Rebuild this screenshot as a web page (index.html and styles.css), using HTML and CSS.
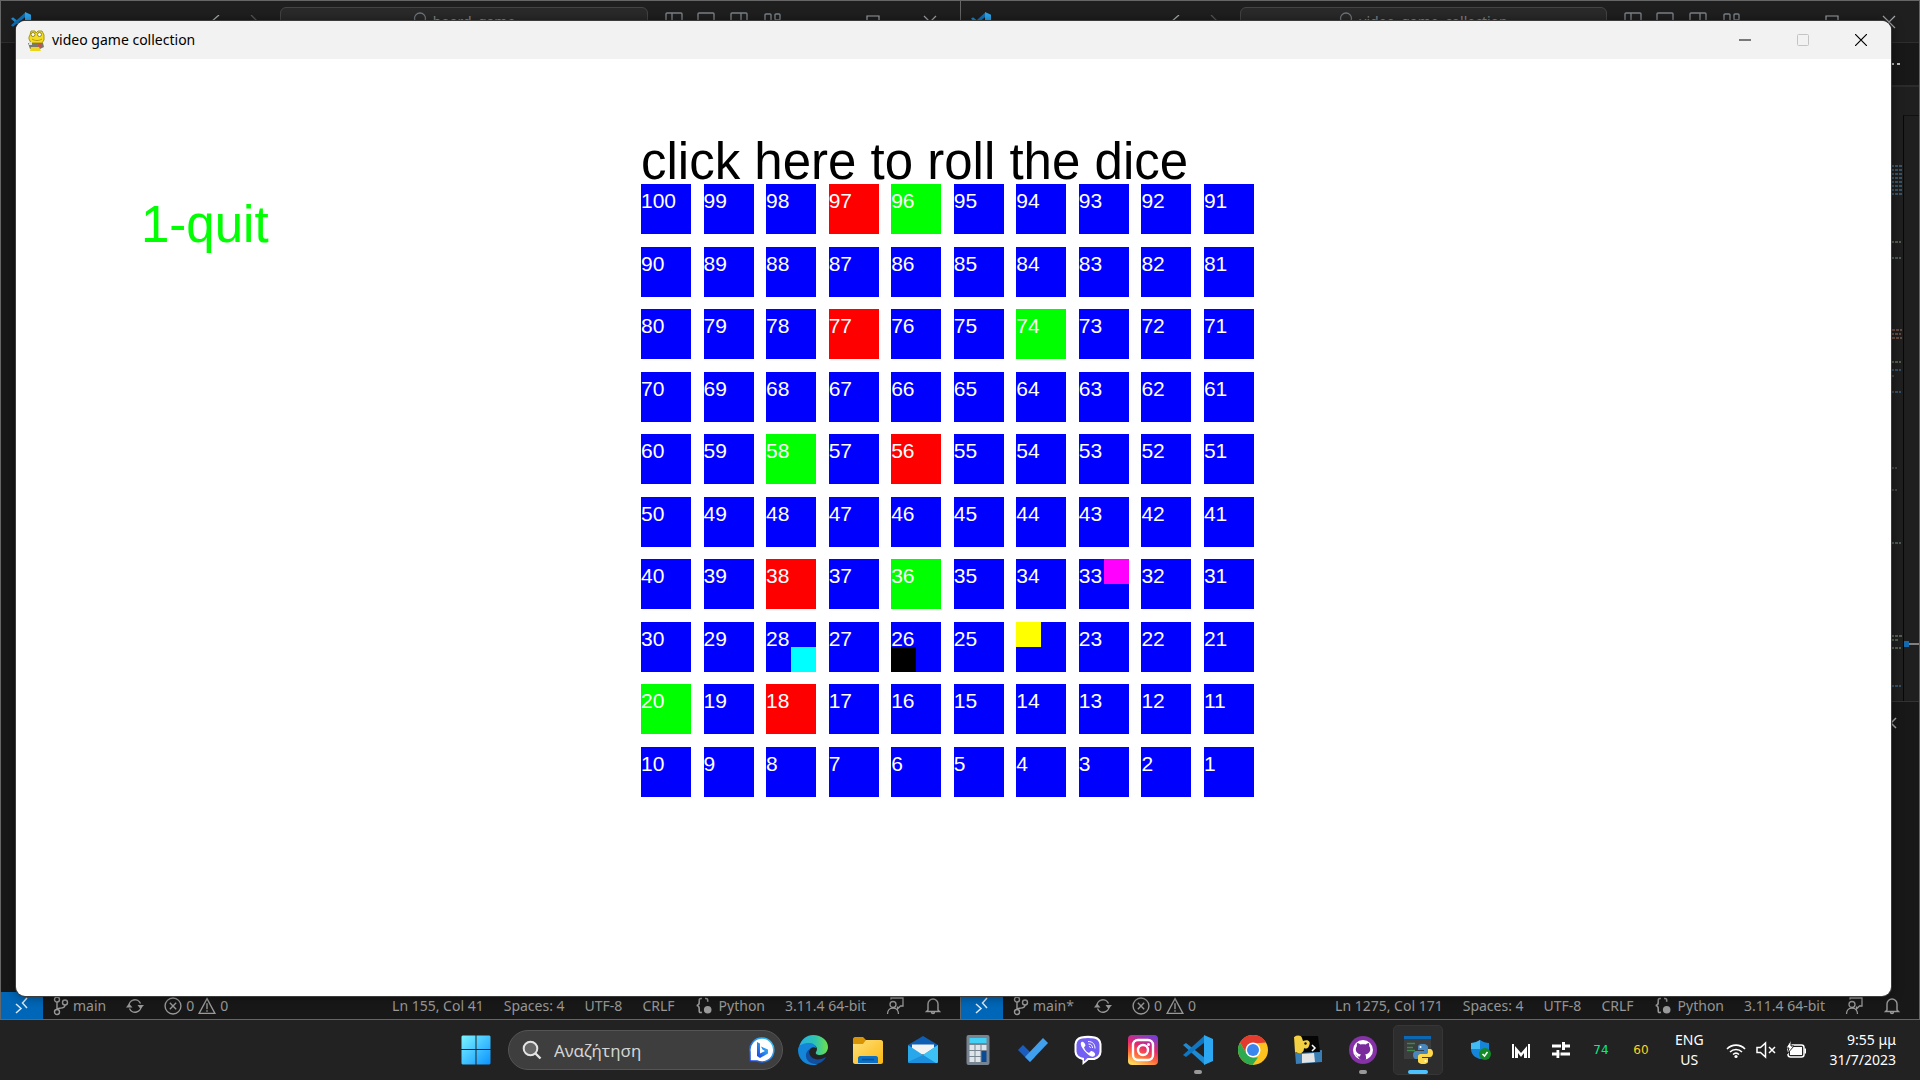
FILE: index.html
```html
<!DOCTYPE html>
<html lang="el">
<head>
<meta charset="utf-8">
<title>video game collection</title>
<link rel="stylesheet" href="styles.css">
</head>
<body>
<svg class="defs" aria-hidden="true">
  <defs>
    <linearGradient id="g-win" x1="0" y1="0" x2="1" y2="1"><stop offset="0" stop-color="#7cf5ff"/><stop offset="1" stop-color="#0a93ff"/></linearGradient>
    <linearGradient id="g-edge" x1="0" y1="0" x2="1" y2="0"><stop offset="0" stop-color="#27b1e8"/><stop offset=".55" stop-color="#2fc3b0"/><stop offset="1" stop-color="#6fe04a"/></linearGradient>
    <linearGradient id="g-folder" x1="0" y1="0" x2="1" y2="1"><stop offset="0" stop-color="#ffe07a"/><stop offset="1" stop-color="#fbb80f"/></linearGradient>
    <linearGradient id="g-insta" x1=".3" y1="1" x2=".7" y2="0"><stop offset="0" stop-color="#ffd65c"/><stop offset=".3" stop-color="#fd6a3a"/><stop offset=".6" stop-color="#e3286f"/><stop offset="1" stop-color="#7a3fd0"/></linearGradient>
    <linearGradient id="g-bing" x1="0" y1="1" x2="1" y2="0"><stop offset="0" stop-color="#1b3fe0"/><stop offset="1" stop-color="#35d0f5"/></linearGradient>
    <symbol id="i-code" viewBox="0 0 30 30"><path d="m0 10 3-2L22 23v6h-1L0 10Z" fill="#1f8ad2"/><path d="m0 20 3 2L22 7V1h-1L0 20Z" fill="#0f76bf"/><path d="m21 0 9 4v22l-9 4Z" fill="#2ca8f2"/></symbol>
    <symbol id="i-remote" viewBox="0 0 14 18"><path d="m1 7 5 4.500L1 16M12 1 7.500 6l4.500 5" fill="none" stroke="#dfe9f2" stroke-width="1.500"/></symbol>
    <symbol id="i-branch" viewBox="0 0 16 20"><g fill="none" stroke="#999" stroke-width="1.400"><circle cx="4" cy="3.500" r="2.500"/><circle cx="4" cy="16" r="2.500"/><circle cx="12" cy="6.500" r="2.500"/><path d="M4 6v7.500M12 9c0 3-3 3-5 3.200-2 .2-3 .8-3 1.500"/></g></symbol>
    <symbol id="i-sync" viewBox="0 0 18 18"><path d="M3 9.500A6 6 0 0 1 14.500 6.500M15 8.500A6 6 0 0 1 3.500 11.500" fill="none" stroke="#999" stroke-width="1.400"/><path d="m0 10.500 3-4 3.500 4ZM18 8l-3.500 4L11.500 8Z" fill="#999"/></symbol>
    <symbol id="i-err" viewBox="0 0 17 17"><g fill="none" stroke="#999" stroke-width="1.300"><circle cx="8.500" cy="8.500" r="7.500"/><path d="m5.500 5.500 6 6m0-6-6 6"/></g></symbol>
    <symbol id="i-warn" viewBox="0 0 17 17"><g fill="none" stroke="#999" stroke-width="1.300"><path d="M8.500 1.500 16 15.500H1ZM8.500 6v5.500m0 1v1.500"/></g></symbol>
    <symbol id="i-brace" viewBox="0 0 16 17"><path d="M6 1.500C3 1 3.500 3 3.500 5S3 8 1 8c2 0 2.500 1 2.500 3.500S3 15 6 14.500M9 1.500c3-.5 2.500 1.500 2.500 3" fill="none" stroke="#999" stroke-width="1.500"/><circle cx="11.500" cy="12" r="3.600" fill="#999"/></symbol>
    <symbol id="i-feed" viewBox="0 0 18 18"><g fill="none" stroke="#999" stroke-width="1.300"><path d="M5 2.500V1h12v8h-2.500L11.500 12V9.500"/><circle cx="7" cy="7.500" r="3"/><path d="M1.500 17c0-8 11-8 11 0"/></g></symbol>
    <symbol id="i-bell" viewBox="0 0 16 18"><path d="M3 13V7a5 5 0 0 1 10 0v6l1.500 1.500h-13ZM6.500 15a1.500 1.500 0 0 0 3 0" fill="none" stroke="#999" stroke-width="1.400"/></symbol>
    <symbol id="i-layouts" viewBox="0 0 116 18"><g fill="none" stroke="#7d848a" stroke-width="1.400"><rect x="1" y="1" width="16" height="16" rx="1"/><path d="M7 1v16"/><rect x="33" y="1" width="16" height="16" rx="1"/><path d="M33 12h16"/><rect x="66" y="1" width="16" height="16" rx="1"/><path d="M76 1v16"/><rect x="100" y="2" width="6" height="15" rx="1"/><rect x="110" y="2" width="5" height="6" rx="1"/></g></symbol>
    <symbol id="i-controls" viewBox="0 0 116 14"><path d="M1 7h13M45 1h12v12H45ZM102 1l12 12m0-12-12 12" fill="none" stroke="#a4a8ac" stroke-width="1.200"/></symbol>
    <symbol id="i-arrows" viewBox="0 0 56 14"><path d="M12 0 4 7l8 7" fill="none" stroke="#a9adb1" stroke-width="1.300"/><path d="m44 0 7 7-7 7" fill="none" stroke="#55585b" stroke-width="1.300"/></symbol>
    <symbol id="i-lens" viewBox="0 0 14 18"><path d="M7 1a5.500 5.500 0 1 1 0 11A5.500 5.500 0 1 1 7 1M4 12l-3 5" fill="none" stroke="#71787e" stroke-width="1.300"/></symbol>
    <symbol id="i-py" viewBox="0 0 20 20"><path d="M10 0C5 0 5 2 5 3v3h6v1H3C1 7 0 9 0 11s1 4 3 4h2v-3c0-1 1-2 2-2h6c1 0 2-1 2-2V3c0-1-1-3-5-3Z" fill="#4787bd"/><path d="M10 20c5 0 5-2 5-3v-3H9v-1h8c2 0 3-2 3-4s-1-4-3-4h-2v3c0 1-1 2-2 2H7c-1 0-2 1-2 2v5c0 1 1 3 5 3Z" fill="#ffd94d"/><circle cx="7.500" cy="3" r="1" fill="#fff"/><circle cx="12.500" cy="17" r="1" fill="#fff"/></symbol>
  </defs>
</svg>

<div class="desktop">
  <section class="editor">
    <header class="editor-title">
      <svg class="editor-logo"><use href="#i-code"/></svg>
      <svg class="arrows"><use href="#i-arrows"/></svg>
      <button class="palette" type="button"><svg class="lens"><use href="#i-lens"/></svg>board_game</button>
      <svg class="layouts"><use href="#i-layouts"/></svg>
      <svg class="controls"><use href="#i-controls"/></svg>
    </header>
    <div class="editor-body"><i class="active-mark"></i></div>
    <footer class="status">
      <button class="remote" type="button" aria-label="Remote"><svg><use href="#i-remote"/></svg></button>
      <span class="item"><svg class="branch"><use href="#i-branch"/></svg>main</span>
      <span class="item"><svg><use href="#i-sync"/></svg></span>
      <span class="item"><svg><use href="#i-err"/></svg>0 <svg><use href="#i-warn"/></svg>0</span>
      <span class="item push">Ln 155, Col 41</span>
      <span class="item">Spaces: 4</span>
      <span class="item">UTF-8</span>
      <span class="item">CRLF</span>
      <span class="item lang"><svg><use href="#i-brace"/></svg>Python</span>
      <span class="item">3.11.4 64-bit</span>
      <span class="item"><svg><use href="#i-feed"/></svg></span>
      <span class="item"><svg><use href="#i-bell"/></svg></span>
    </footer>
  </section>
  <section class="editor">
    <header class="editor-title">
      <svg class="editor-logo"><use href="#i-code"/></svg>
      <svg class="arrows"><use href="#i-arrows"/></svg>
      <button class="palette" type="button"><svg class="lens"><use href="#i-lens"/></svg>video_game_collection</button>
      <svg class="layouts"><use href="#i-layouts"/></svg>
      <svg class="controls"><use href="#i-controls"/></svg>
    </header>
    <div class="tabs"><svg class="dots" viewBox="0 0 16 4"><path d="M0 1h3v2H0ZM6 1h3v2H6ZM12 1h3v2h-3Z" fill="#bbb"/></svg></div>
    <div class="code">
      <svg class="minimap" viewBox="0 0 12 614">
        <g stroke-dasharray="3 1" stroke-width="2" fill="none">
          <path d="M0 79h11M0 83h11M0 87h11M0 91h11M0 95h11M0 99h11M0 103h11M0 107h11" stroke="#36566c"/>
          <path d="M0 155h10M0 275h10M0 549h11M0 553h8M0 561h10" stroke="#52604b"/>
          <path d="M0 171h10M0 456h10" stroke="#4a5a56"/>
          <path d="M1 243h10M0 247h10M1 251h10" stroke="#654b42"/>
          <path d="M0 283h10M4 305h6M0 599h10" stroke="#34506a"/>
          <path d="M0 289h3M0 305h3M0 381h6M0 403h6" stroke="#444"/>
        </g>
      </svg>
      <div class="ruler"><i class="ruler-mark"></i></div>
    </div>
    <div class="panel"><svg class="panel-close" viewBox="0 0 12 12"><path d="m1 1 10 10M11 1 1 11" stroke="#aaa" stroke-width="1.500"/></svg></div>
    <footer class="status">
      <button class="remote" type="button" aria-label="Remote"><svg><use href="#i-remote"/></svg></button>
      <span class="item"><svg class="branch"><use href="#i-branch"/></svg>main*</span>
      <span class="item"><svg><use href="#i-sync"/></svg></span>
      <span class="item"><svg><use href="#i-err"/></svg>0 <svg><use href="#i-warn"/></svg>0</span>
      <span class="item push">Ln 1275, Col 171</span>
      <span class="item">Spaces: 4</span>
      <span class="item">UTF-8</span>
      <span class="item">CRLF</span>
      <span class="item lang"><svg><use href="#i-brace"/></svg>Python</span>
      <span class="item">3.11.4 64-bit</span>
      <span class="item"><svg><use href="#i-feed"/></svg></span>
      <span class="item"><svg><use href="#i-bell"/></svg></span>
    </footer>
  </section>

  <main class="window">
    <header class="window-title">
      <svg class="window-icon" viewBox="0 0 18 21"><path d="M4 1h4l1 2 2-2h4l2 4v5l-2 3H4L2 9V7l1-2Z" fill="#f6dc1e" stroke="#a3941c"/><circle cx="6" cy="4.500" r="2" fill="#fff" stroke="#776d20" stroke-width=".8"/><circle cx="12.500" cy="4.500" r="2" fill="#fff" stroke="#776d20" stroke-width=".8"/><path d="M5 9c3 2 7 2 10 0" stroke="#b29a13" fill="none"/><path d="M1 13h15l1 4-4 2H3Z" fill="#77796c"/><path d="M11 13h3v4h-3Z" fill="#b9584b"/><path d="M4 17h8l2 4H3Z" fill="#eed51d"/><path d="M2 12h3v3H2Z" fill="#ddd"/></svg>
      <span class="window-name">video game collection</span>
      <button class="ctl" type="button" aria-label="Minimize"><svg viewBox="0 0 12 12"><path d="M0 6h12" stroke="#000" stroke-width="1.200"/></svg></button>
      <button class="ctl" type="button" aria-label="Maximize" disabled><svg viewBox="0 0 12 12"><rect x=".5" y=".5" width="11" height="11" rx="1" fill="none" stroke="#c4c4c4"/></svg></button>
      <button class="ctl" type="button" aria-label="Close"><svg viewBox="0 0 12 12"><path d="m0 0 12 12M12 0 0 12" stroke="#000" stroke-width="1.200"/></svg></button>
    </header>
    <div class="game">
      <div class="menu"><button class="quit" type="button">1-quit</button></div>
      <div class="play">
        <button class="roll" type="button">click here to roll the dice</button>
        <div class="board">
          <div class="tile">100</div><div class="tile">99</div><div class="tile">98</div><div class="tile snake">97</div><div class="tile ladder">96</div><div class="tile">95</div><div class="tile">94</div><div class="tile">93</div><div class="tile">92</div><div class="tile">91</div>
          <div class="tile">90</div><div class="tile">89</div><div class="tile">88</div><div class="tile">87</div><div class="tile">86</div><div class="tile">85</div><div class="tile">84</div><div class="tile">83</div><div class="tile">82</div><div class="tile">81</div>
          <div class="tile">80</div><div class="tile">79</div><div class="tile">78</div><div class="tile snake">77</div><div class="tile">76</div><div class="tile">75</div><div class="tile ladder">74</div><div class="tile">73</div><div class="tile">72</div><div class="tile">71</div>
          <div class="tile">70</div><div class="tile">69</div><div class="tile">68</div><div class="tile">67</div><div class="tile">66</div><div class="tile">65</div><div class="tile">64</div><div class="tile">63</div><div class="tile">62</div><div class="tile">61</div>
          <div class="tile">60</div><div class="tile">59</div><div class="tile ladder">58</div><div class="tile">57</div><div class="tile snake">56</div><div class="tile">55</div><div class="tile">54</div><div class="tile">53</div><div class="tile">52</div><div class="tile">51</div>
          <div class="tile">50</div><div class="tile">49</div><div class="tile">48</div><div class="tile">47</div><div class="tile">46</div><div class="tile">45</div><div class="tile">44</div><div class="tile">43</div><div class="tile">42</div><div class="tile">41</div>
          <div class="tile">40</div><div class="tile">39</div><div class="tile snake">38</div><div class="tile">37</div><div class="tile ladder">36</div><div class="tile">35</div><div class="tile">34</div><div class="tile">33<i class="token magenta"></i></div><div class="tile">32</div><div class="tile">31</div>
          <div class="tile">30</div><div class="tile">29</div><div class="tile">28<i class="token cyan"></i></div><div class="tile">27</div><div class="tile">26<i class="token black"></i></div><div class="tile">25</div><div class="tile"><i class="token yellow"></i></div><div class="tile">23</div><div class="tile">22</div><div class="tile">21</div>
          <div class="tile ladder">20</div><div class="tile">19</div><div class="tile snake">18</div><div class="tile">17</div><div class="tile">16</div><div class="tile">15</div><div class="tile">14</div><div class="tile">13</div><div class="tile">12</div><div class="tile">11</div>
          <div class="tile">10</div><div class="tile">9</div><div class="tile">8</div><div class="tile">7</div><div class="tile">6</div><div class="tile">5</div><div class="tile">4</div><div class="tile">3</div><div class="tile">2</div><div class="tile">1</div>
        </div>
      </div>
    </div>
  </main>
</div>

<nav class="taskbar">
  <div class="apps">
    <button class="app" type="button" aria-label="Start"><svg viewBox="0 0 30 30"><path d="M1.500.5H14.500V14H.5V1.500ZM15.500.5H28.500L29.500 1.500V14h-14ZM.5 15h14v14.500H1.500l-1-1ZM15.500 15h14v13.500l-1 1h-13Z" fill="url(#g-win)"/></svg></button>
    <label class="search">
      <svg class="search-lens" viewBox="0 0 20 20"><circle cx="8.500" cy="8.500" r="6.800" fill="#666" stroke="#e4e4e4" stroke-width="2"/><path d="m13.500 13.500 5 5" stroke="#e4e4e4" stroke-width="2.400"/></svg>
      <input type="text" placeholder="Αναζήτηση" aria-label="Αναζήτηση">
      <svg class="bing" viewBox="0 0 26 26"><path d="M13 1a12 12 0 1 1-5 23H1v-9A12 12 0 0 1 13 1Z" fill="#fff" stroke="url(#g-bing)" stroke-width="1.500"/><path d="m8 5 3 1.500v10l5-2.500-2.500-1.500-1.500-3 7 3v4L11 21l-3-2Z" fill="url(#g-bing)"/></svg>
    </label>
    <button class="app" type="button" aria-label="Edge"><svg viewBox="0 0 30 30"><path d="M1 12C3 4 9 0 15 0c9 0 15 6 15 12 0 5-4 8-8 8-3 0-5-1-4-3 3-4-1-8-6-8-6 0-10 2-11 3Z" fill="url(#g-edge)"/><path d="M0 15C0 10 5 8 11 8c4 0 7 2 7 5-8-4-12 12 2 16-2 1-4 1-5 1C7 30 0 24 0 15Z" fill="#1386d9"/><path d="M11 16c0 8 9 11 17 6-4 8-13 9-18 4-4-5-2-11 4-13-2 1-3 2-3 3Z" fill="#134f9e"/></svg></button>
    <button class="app" type="button" aria-label="Explorer"><svg viewBox="0 0 30 30"><path d="M0 4c0-1 1-2 2-2h8l3 3v6H0Z" fill="#d99406"/><path d="M0 9h10l3-4h15c1 0 2 1 2 2v20c0 1-1 2-2 2H2c-1 0-2-1-2-2Z" fill="url(#g-folder)"/><path d="M5 28v-5c0-1 1-2 2-2h16c1 0 2 1 2 2v5Z" fill="#0c70c4"/><path d="M9 24.500h12" stroke="#074d91" stroke-width="1.500"/></svg></button>
    <button class="app" type="button" aria-label="Mail"><svg viewBox="0 0 30 30"><path d="M0 10 15 1l15 9-4 5H4Z" fill="#0e5fb4"/><path d="M4 9.500h22v10H4Z" fill="#f3f3f3"/><path d="M0 10l15 10L30 10v17l-1 1H1l-1-1Z" fill="#28a8ea"/><path d="M15 20 30 10v17l-1 1h-2Z" fill="#3dc2f6"/><path d="m0 27 15-7 13 8H1Z" fill="#1c8fdd"/></svg></button>
    <button class="app" type="button" aria-label="Calculator"><svg viewBox="0 0 30 30"><rect x="3.500" width="23" height="30" rx="2" fill="#788490"/><path d="M6.500 3h17v5h-17Z" fill="#43d0f5"/><path d="M6.500 10h5v5h-5ZM12.500 10h5v5h-5ZM18.500 10h5v5h-5ZM6.500 16h5v5h-5ZM12.500 16h5v5h-5ZM6.500 22h5v5h-5ZM12.500 22h5v5h-5Z" fill="#dde4ea"/><path d="M18.500 16h5v11h-5Z" fill="#0c4b94"/></svg></button>
    <button class="app" type="button" aria-label="To Do"><svg viewBox="0 0 30 30"><path d="m0 15 5-5 12 12-5 5Z" fill="#1a5dbe"/><path d="M7 22 25 3l5 5-18 19Z" fill="#41a0ee"/></svg></button>
    <button class="app" type="button" aria-label="Viber"><svg viewBox="0 0 30 30"><path d="M8 1.500Q15 0 22 1.500 28 3 28.500 9v8q-.5 6-7 8h-6l-6 5v-5Q2 23 1.500 17V9Q2 3 8 1.500Z" fill="#fff"/><path d="M9 3.500q6-1 12 0 5 1 5.500 6v7q-.5 5-6 6.500h-6l-3.500 3.500V23Q4 22 3.500 16.500v-7Q4 4.500 9 3.500Z" fill="#7360f2"/><path d="M8.500 7c2-1.500 4 2 4 3.500l-1.500 2c1 3 3 5 5 5.500l2-2c2 0 5 2.500 4 4-2 4-7 0-10-3.500S6.500 9 8.500 7Z" fill="#fff"/><path d="M15 6.500c5 0 7 3 7 7M15.500 9c3 0 4 2 4 4M16 11.500c1 0 1.500 1 1.500 1.500" fill="none" stroke="#fff"/></svg></button>
    <button class="app" type="button" aria-label="Instagram"><svg viewBox="0 0 30 30"><rect width="30" height="30" rx="4" fill="url(#g-insta)"/><g fill="none" stroke="#fff" stroke-width="2.400"><rect x="5" y="5" width="20" height="20" rx="5"/><circle cx="15" cy="15" r="5"/></g><circle cx="20.500" cy="9.500" r="1.500" fill="#fff"/></svg></button>
    <button class="app open" type="button" aria-label="Visual Studio Code"><svg><use href="#i-code"/></svg></button>
    <button class="app" type="button" aria-label="Chrome"><svg viewBox="0 0 30 30"><circle cx="15" cy="15" r="15" fill="#fcc31e"/><path d="M2 7.500A15 15 0 0 1 28 7.500L15 8.500 8.500 18.700Z" fill="#e33b2e"/><path d="M2 7.500 8.500 18.700 15 22.500h5L14.500 30A15 15 0 0 1 2 7.500Z" fill="#2da94f"/><circle cx="15" cy="15" r="7.500" fill="#fff"/><circle cx="15" cy="15" r="6" fill="#3a86ee"/></svg></button>
    <button class="app" type="button" aria-label="PyCom"><svg viewBox="0 0 30 30"><path d="m2 17 27-2v12L3 29Z" fill="#397eb5"/><path d="M1 1h24l2 16-24 1Z" fill="#050505"/><path d="M1 2c3-2 7-2 8 1l1 3c6-2 8 1 6 5-1 3-4 3-5 2 0 6-5 6-9 4Z" fill="#f4d142"/><path d="m19 10 3 3-3 3" fill="none" stroke="#fff" stroke-width="1.500"/><circle cx="12.500" cy="8.500" r="1.200" fill="#111"/><path d="m9 19 12-1 1 9-13 1Z" fill="#e4e4e4"/></svg></button>
    <button class="app open" type="button" aria-label="GitHub Desktop"><svg viewBox="0 0 30 30"><circle cx="15" cy="15" r="14" fill="#8432a6"/><circle cx="15" cy="15" r="10" fill="#fff"/><path d="M12 24.500v-3c-3 .5-4-1-4.500-2.500M12 21c.5-1 .5-1 1-1.500-6-1-6-6-4-8.500-.5-1 0-2.500.3-3 1 0 2.500 1 3 1.500 2-.5 3.500-.5 5.500 0 .5-.5 2-1.500 3-1.500.3.500.7 2 .3 3 2 2.500 2 7.500-4 8.500.8.800.9 1.500.9 3v2c-2 .7-4 .7-6 0Z" fill="#7a2a9d"/></svg></button>
    <button class="app current" type="button" aria-label="Python"><svg viewBox="0 0 30 30"><path d="M1 1h27v23H1Z" fill="#3b3d3f"/><path d="M1 1h27v3H1Z" fill="#0d68b4"/><path d="M4 8.500h8M4 12.500h6M4 15.500h8" stroke="#3f8848" stroke-width="1.500"/><use href="#i-py" x="10" y="9" width="20" height="20"/></svg></button>
  </div>
  <div class="tray">
    <div class="tray-set">
      <svg viewBox="0 0 20 20"><path d="M9 0c3 2 6 3 9 3v6c0 6-5 9-9 10C5 18 0 15 0 9V3c3 0 6-1 9-3Z" fill="#1585dc"/><path d="M9 0v9H0V3c3 0 6-1 9-3Z" fill="#42baf2"/><circle cx="14" cy="14" r="6" fill="#138a26"/><path d="m11.500 14 2 2 3-4" fill="none" stroke="#fff" stroke-width="1.500"/></svg>
      <svg viewBox="0 0 20 20"><path d="M2 4v14M18 4v14" stroke="#fff" stroke-width="2"/><path d="M4 18V6l6 7 6-7v12h-3v-5l-3 4-3-4v5Z" fill="#fff"/></svg>
      <svg viewBox="0 0 20 20"><path d="M1 6h18M1 14h18" stroke="#fff" stroke-width="3"/><path d="M12.500 2v8M7 10v8" stroke="#fff" stroke-width="3"/><path d="M10.500 2v8M9 10v8" stroke="#222"/></svg>
      <span class="temp green">74</span>
      <span class="temp gold">60</span>
    </div>
    <div class="locale">ENG<br>US</div>
    <div class="net">
      <svg viewBox="0 0 20 20"><g fill="none" stroke="#fff" stroke-width="1.600"><path d="M1 9a12.500 12.500 0 0 1 18 0M4 12a8.500 8.500 0 0 1 12 0M7 14.500a4.500 4.500 0 0 1 6 0"/></g><circle cx="10" cy="16.500" r="1.600" fill="#fff"/></svg>
      <svg viewBox="0 0 20 20"><path d="M1 7.500h3.500l5-4.500v14l-5-4.500H1Z" fill="none" stroke="#fff" stroke-width="1.500"/><path d="m13 7 6 6m0-6-6 6" stroke="#fff" stroke-width="1.500"/></svg>
      <svg viewBox="0 0 20 20"><rect x="2" y="5" width="16" height="12" rx="2.500" fill="none" stroke="#fff" stroke-width="1.500"/><path d="M4 7h12v8H4ZM18.500 8.500H20v5h-1.500Z" fill="#fff"/><path d="M5 0 0 8h3l-2 6 7-8H5Z" fill="#fff" stroke="#222"/></svg>
    </div>
    <div class="clock">9:55 μμ<br>31/7/2023</div>
  </div>
</nav>
</body>
</html>
```
FILE: styles.css
```css
* { box-sizing: border-box; }

body {
  margin: 0;
  min-height: 100vh;
  display: grid;
  grid-template-rows: 1fr 60px;
  background: #222;
  color: #fff;
  font-family: "Noto Sans", "Open Sans", sans-serif;
  font-size: 14px;
  overflow: hidden;
}

button {
  font: inherit;
  color: inherit;
  background: none;
  border: 0;
  padding: 0;
}

svg { display: block; flex: none; }
.defs { position: absolute; width: 0; height: 0; }

/* Editors behind the game window */
.desktop {
  position: relative;
  display: grid;
  grid-template-columns: 1fr 1fr;
}

.editor {
  display: flex;
  flex-direction: column;
  min-width: 0;
  background: #181818;
  border: 1px solid #666;
  border-right-width: 0;
}
.editor:nth-child(2) { border-right-width: 1px; }

.editor-title {
  display: flex;
  height: 42px;
  padding: 0 22px 0 10px;
  background: #1f1f1f;
  border-bottom: 1px solid #2e2e2e;
}
.editor-logo { width: 20px; height: 20px; margin-top: 11px; }
.arrows { width: 56px; height: 14px; margin: 14px 0 0 176px; }
.palette {
  display: flex;
  justify-content: center;
  gap: 6px;
  flex: 1;
  height: 30px;
  margin: 6px 17px 0 17px;
  padding-top: 4px;
  background: #2a2a2a;
  border: 1px solid #454545;
  border-radius: 6px;
  color: #858b91;
  font-size: 14px;
  line-height: 20px;
}
.lens { width: 14px; height: 18px; }
.layouts { width: 116px; height: 18px; margin-top: 11px; }
.controls { width: 116px; height: 14px; margin: 14px 0 0 41px; }

.editor-body {
  flex: 1;
  padding: 306px 0 0 14px;
}
.active-mark { display: block; width: 1px; height: 22px; background: #1b1b8f; }

.tabs {
  display: flex;
  justify-content: flex-end;
  align-items: center;
  height: 44px;
  padding-right: 18px;
  border-bottom: 2px solid #2b2b2b;
}
.dots { width: 16px; height: 4px; }

.code {
  display: flex;
  justify-content: flex-end;
  flex: 1;
  background: #1f1f1f;
}
.minimap { width: 12px; height: 614px; }
.ruler {
  width: 16px;
  margin-top: 28px;
  padding-top: 525px;
  border-left: 1px solid #080808;
  border-top: 1px solid #111;
}
.ruler-mark {
  display: block;
  height: 6px;
  border-left: 5px solid #1469ad;
  background: linear-gradient(transparent 2px, #808080 2px, #808080 4px, transparent 4px);
}
.panel {
  display: flex;
  justify-content: flex-end;
  height: 291px;
  padding: 15px 22px 0 0;
  border-top: 1px solid #333;
}
.panel-close { width: 12px; height: 12px; }

.status {
  display: flex;
  align-items: stretch;
  height: 27px;
  padding-right: 8px;
  color: #999;
  white-space: nowrap;
}
.status svg { width: 18px; height: 18px; }
.status .branch { width: 16px; height: 20px; }
.remote {
  display: grid;
  place-items: center;
  width: 42px;
  background: #0067b8;
}
.item {
  display: flex;
  align-items: center;
  gap: 4px;
  padding: 0 10px;
}
.lang { gap: 6px; }
.push { margin-left: auto; }

/* Game window */
.window {
  position: absolute;
  inset: 21px 29px 24px 16px;
  display: flex;
  flex-direction: column;
  overflow: hidden;
  border-radius: 9px;
  background: #fff;
  box-shadow: 0 0 0 1px #3c3c3c, 0 0 12px rgba(0, 0, 0, .5);
  color: #000;
}
.window-title {
  display: flex;
  align-items: center;
  height: 38px;
  padding: 0 1px 0 11px;
  background: #f2f2f2;
}
.window-icon { width: 18px; height: 21px; }
.window-name { margin: 0 auto 0 7px; line-height: 18px; }
.ctl {
  display: grid;
  place-items: center;
  width: 58px;
  height: 38px;
}
.ctl svg { width: 12px; height: 12px; }

.game {
  flex: 1;
  display: grid;
  grid-template-columns: 1fr 2fr;
  align-items: start;
  padding-top: 81px;
  font-family: "Liberation Sans", Arial, sans-serif;
}
.menu { padding: 63px 0 0 20%; }
.quit, .roll {
  display: block;
  font-size: 51px;
  line-height: 44px;
  white-space: nowrap;
}
.quit { color: #0f0; }
.board {
  display: grid;
  grid-template-columns: repeat(10, 50px);
  grid-auto-rows: 50px;
  justify-content: space-between;
  align-content: space-between;
  width: 613px;
  height: 613px;
}
.tile {
  position: relative;
  background: #00f;
  color: #fff;
  font-size: 21px;
  line-height: 33px;
}
.snake { background: #f00; }
.ladder { background: #0f0; }
.token { position: absolute; width: 25px; height: 25px; }
.magenta { top: 0; right: 0; background: #f0f; }
.cyan { bottom: 0; right: 0; background: #0ff; }
.black { bottom: 0; left: 0; background: #000; }
.yellow { top: 0; left: 0; background: #ff0; }

/* Taskbar */
.taskbar {
  display: grid;
  grid-template-columns: 451fr auto 477fr;
  background: #222;
}
.apps {
  grid-column: 2;
  display: flex;
  align-items: center;
  gap: 5px;
}
.app {
  position: relative;
  display: grid;
  place-items: center;
  width: 50px;
  height: 50px;
  border-radius: 5px;
}
.app svg { width: 30px; height: 30px; }
.open::after, .current::after {
  content: "";
  position: absolute;
  bottom: 1px;
  left: 21px;
  width: 8px;
  height: 4px;
  border-radius: 2px;
  background: #999;
}
.current { background: #2d2d2d; border: 1px solid #363636; }
.current::after { bottom: 0; left: 14px; width: 20px; background: #4cc2ff; }

.search {
  display: flex;
  align-items: center;
  width: 275px;
  height: 40px;
  margin: 0 0 0 2px;
  padding: 0 7px 0 13px;
  border: 1px solid #555;
  border-radius: 20px;
  background: #3e3e3e;
}
.search-lens { width: 20px; height: 20px; }
.search input {
  flex: 1;
  min-width: 0;
  margin-left: 12px;
  padding: 0;
  border: 0;
  outline: 0;
  background: none;
  color: #ddd;
  font: 17px "Noto Sans", sans-serif;
}
.search input::placeholder { color: #d4d4d4; opacity: 1; }
.bing { width: 26px; height: 26px; }

.tray {
  display: flex;
  align-items: center;
  padding: 0 24px 0 18px;
  line-height: 20px;
}
.tray-set { display: flex; align-items: center; }
.tray-set > * { width: 20px; margin: 0 10px; }
.tray-set svg, .net svg { height: 20px; }
.temp { font: 12px/20px "DejaVu Sans", sans-serif; text-align: center; }
.green { color: #00f08a; }
.gold { color: #ffd21e; }
.locale { margin-left: 14px; text-align: center; }
.net { display: flex; gap: 10px; margin-left: auto; }
.net svg { width: 20px; }
.clock { margin-left: 24px; text-align: right; }
```
